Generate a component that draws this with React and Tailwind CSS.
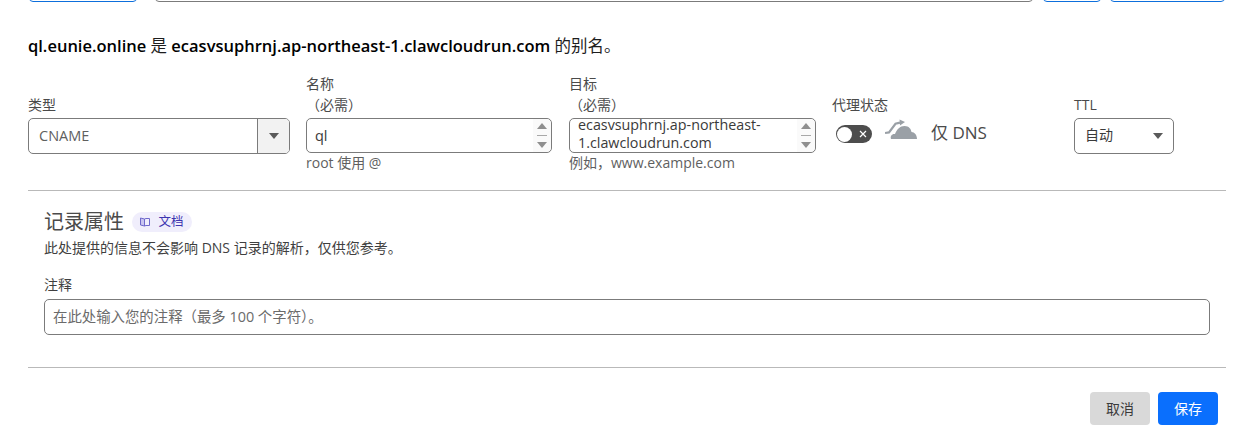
import { useState } from 'react'

const fontStack = "font-['Open_Sans','Noto_Sans_CJK_SC',sans-serif]"

function FieldLabel({ title, required }) {
  return (
    <div className="h-[43px] pb-[3px] flex flex-col justify-end text-[14px] leading-[21px] text-[#4a4a4a]">
      <span>{title}</span>
      {required && <span>（必需）</span>}
    </div>
  )
}

function ScrollArrows() {
  return (
    <div className="w-[18px] shrink-0 flex flex-col items-center justify-center gap-[6px] bg-[#fafafa] rounded-r-[5px] pr-[1px]">
      <svg width="10" height="6" viewBox="0 0 10 6"><path d="M5 0 L10 6 L0 6 Z" fill="#8f8f8f" /></svg>
      <div className="w-[10px] h-[1px] bg-[#a8a8a8]" />
      <svg width="10" height="6" viewBox="0 0 10 6"><path d="M0 0 L10 0 L5 6 Z" fill="#8f8f8f" /></svg>
    </div>
  )
}

function ProxyCloud() {
  return (
    <svg width="33" height="22" viewBox="0 0 33 22" className="shrink-0">
      {/* arrow */}
      <path d="M0 14 L4 13.4 L10.5 4.8 L15 3.6" fill="none" stroke="#9aa0a6" strokeWidth="2.2" />
      <path d="M14.5 0.6 L20 3 L15 6.4 Z" fill="#9aa0a6" />
      {/* cloud */}
      <path d="M6 20 C5 17 7 14.5 10 15 C12 10 15 7 19.5 7 C24 7 26 10 26.5 13 C29.5 13 32 16 32 20 Z" fill="#9aa0a6" />
    </svg>
  )
}

export default function App() {
  const [comment, setComment] = useState('')

  return (
    <div className={`w-[1249px] h-[433px] overflow-hidden bg-white ${fontStack}`}>
      {/* clipped row of the record above */}
      <div className="h-[2px] pl-[29px] flex gap-[18px] items-end">
        <div className="w-[108px] h-[10px] shrink-0 border border-[#0d6fdc] rounded-[4px]" />
        <div className="w-[878px] h-[10px] shrink-0 border border-[#7b7b7b] rounded-[4px]" />
        <div className="flex gap-[9px] -ml-[8px]">
          <div className="w-[58px] h-[10px] border border-[#0d6fdc] rounded-[4px]" />
          <div className="w-[115px] h-[10px] border border-[#0d6fdc] rounded-[4px]" />
        </div>
      </div>

      <div className="w-[1198px] ml-[28px]">
        <p className="mt-[33px] text-[16.5px] leading-[22px] text-[#1d1d1d]">
          <strong className="font-semibold text-black">ql.eunie.online</strong> 是{' '}
          <strong className="font-semibold text-black">ecasvsuphrnj.ap-northeast-1.clawcloudrun.com</strong> 的别名。
        </p>

        <div className="mt-[18px] flex items-start h-[106px]">
          <div className="w-[262px] mr-[16px]">
            <FieldLabel title="类型" />
            <div className="h-[36px] flex border border-[#7b7b7b] rounded-[5px] overflow-hidden">
              <div className="flex-1 pl-[10px] text-[14.5px] leading-[34px] text-[#5f5f5f]">CNAME</div>
              <div className="w-[32px] flex items-center justify-center border-l border-[#7b7b7b] bg-[#f2f2f2]">
                <svg width="10" height="6" viewBox="0 0 10 6"><path d="M0 0 H10 L5 6 Z" fill="#5a5a5a" /></svg>
              </div>
            </div>
          </div>

          <div className="w-[246px] mr-[17px]">
            <FieldLabel title="名称" required />
            <div className="h-[35px] flex border border-[#7b7b7b] rounded-[5px] overflow-hidden">
              <div className="flex-1 pl-[8px] text-[14.5px] leading-[33px] text-[#3a3a3a]">ql</div>
              <ScrollArrows />
            </div>
            <p className="text-[14px] leading-[20px] text-[#5f5f5f]">root 使用 @</p>
          </div>

          <div className="w-[247px] mr-[16px]">
            <FieldLabel title="目标" required />
            <div className="h-[35px] flex border border-[#7b7b7b] rounded-[5px] overflow-hidden">
              <div className="flex-1 pl-[8px] text-[14.3px] leading-[18px] text-[#3a3a3a] -mt-[3px]">
                ecasvsuphrnj.ap-northeast-
                <br />
                1.clawcloudrun.com
              </div>
              <ScrollArrows />
            </div>
            <p className="text-[14px] leading-[20px] text-[#5f5f5f]">例如，www.example.com</p>
          </div>

          <div className="w-[242px]">
            <FieldLabel title="代理状态" />
            <div className="flex items-center pl-[4px] h-[30px]">
              <div className="w-[36px] h-[18px] mt-[2px] shrink-0 rounded-full bg-[#4d4d4d] flex items-center justify-between pl-[1px] pr-[5px]">
                <div className="w-[15px] h-[15px] rounded-full bg-white" />
                <svg width="8" height="8" viewBox="0 0 8 8"><path d="M1 1 L7 7 M7 1 L1 7" stroke="#ffffff" strokeWidth="1.2" /></svg>
              </div>
              <div className="ml-[13px] -mt-[6px]"><ProxyCloud /></div>
              <span className="ml-[13px] text-[17px] text-[#4a4a4a]">仅 DNS</span>
            </div>
          </div>

          <div className="w-[100px]">
            <FieldLabel title="TTL" />
            <div className="h-[36px] flex items-center justify-between pl-[10px] pr-[10px] border border-[#7b7b7b] rounded-[5px]">
              <span className="text-[14px] leading-[20px] pb-[2px] text-[#3a3a3a]">自动</span>
              <svg width="10" height="6" viewBox="0 0 10 6"><path d="M0 0 H10 L5 6 Z" fill="#5a5a5a" /></svg>
            </div>
          </div>
        </div>

        <div className="mt-[9px] border-t border-[#b9b9b9]" />

        <div className="px-[16px]">
          <div className="mt-[20px] flex items-center gap-[8px] h-[22px]">
            <h3 className="text-[20px] leading-[22px] text-[#4a4a4a]">记录属性</h3>
            <a className="w-[60px] h-[20px] rounded-full bg-[#f0eefc] flex items-center justify-center gap-[8px] text-[12.5px] text-[#3d35b0]">
              <svg width="10" height="10" viewBox="0 0 10 10" fill="none" stroke="#6f69cc" strokeWidth="1">
                <path d="M0.5 1 L4.5 2 V9 L0.5 8 Z" fill="#c9c5f0" />
                <path d="M4.5 2 L6 1.5 H9.5 V8.5 H6 L4.5 9" />
              </svg>
              文档
            </a>
          </div>
          <p className="mt-[4px] text-[14px] leading-[22px] text-[#3f3f3f]">此处提供的信息不会影响 DNS 记录的解析，仅供您参考。</p>
          <label className="block mt-[17px] text-[14px] leading-[18px] text-[#3f3f3f]">注释</label>
          <input
            value={comment}
            onChange={(e) => setComment(e.target.value)}
            placeholder="在此处输入您的注释（最多 100 个字符）。"
            className="block mt-[5px] w-[1166px] h-[36px] px-[8px] pb-[2px] border border-[#7b7b7b] rounded-[5px] text-[14.4px] placeholder:text-[#6b6b6b] outline-none"
          />
        </div>

        <div className="mt-[32px] border-t border-[#b9b9b9]" />

        <div className="mt-[24px] pr-[8px] flex justify-end gap-[8px]">
          <button className="w-[60px] h-[33px] rounded-[4px] bg-[#d9d9d9] text-[14px] text-[#3a3a3a]">取消</button>
          <button className="w-[60px] h-[33px] rounded-[4px] bg-[#0a6ffd] text-[14px] text-white">保存</button>
        </div>
      </div>
    </div>
  )
}
